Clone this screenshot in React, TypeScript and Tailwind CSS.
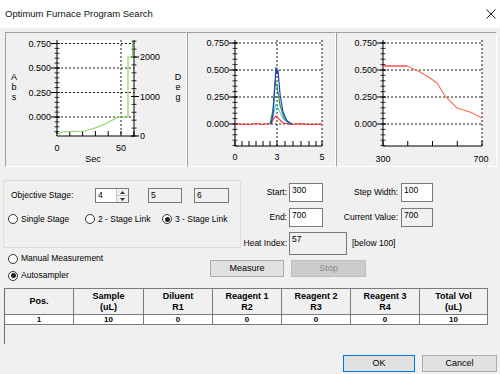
import React from 'react';

const FONT = "font-['Liberation_Sans',Arial,sans-serif]";

// helpers for chart drawing
const range = (from: number, to: number, step: number) => {
  const out: number[] = [];
  for (let v = from; v <= to + 1e-9; v += step) out.push(v);
  return out;
};

const pts = (p: number[][]) => p.map(q => q.join(',')).join(' ');

const AbsAxis = ({ x, y0, scale, top, bottom }: { x: number; y0: number; scale: number; top: number; bottom: number }) => {
  const minor = range(-0.2, 0.75, 0.05).map(v => y0 - v * scale).filter(y => y >= top && y <= bottom);
  const majors = [0.75, 0.5, 0.25, 0].map(v => ({ v, y: y0 - v * scale }));
  return (
    <g>
      <line x1={x} y1={top} x2={x} y2={bottom} stroke="#000" />
      {minor.map((y, i) => (
        <line key={i} x1={x - 2.5} y1={y} x2={x + 2.5} y2={y} stroke="#000" strokeWidth={0.8} />
      ))}
      {majors.map(m => (
        <g key={m.v}>
          <line x1={x - 6} y1={m.y} x2={x + 3} y2={m.y} stroke="#000" />
          <text x={x - 6} y={m.y + 3} fontSize={9} textAnchor="end" fontFamily="Liberation Sans, Arial, sans-serif">
            {m.v.toFixed(3)}
          </text>
        </g>
      ))}
    </g>
  );
};

const Dashed = ({ x1, y1, x2, y2 }: { x1: number; y1: number; x2: number; y2: number }) => (
  <line x1={x1} y1={y1} x2={x2} y2={y2} stroke="#000" strokeWidth={0.9} strokeDasharray="2 2" />
);

const Chart1 = () => {
  const y0 = 117;
  const sc = 98;
  const degY = (d: number) => 136 - d * 0.0395;
  return (
    <svg width={180} height={133} viewBox="6 33 180 133">
      <rect x={57} y={40} width={77} height={96} fill="#fff" />
      {[0.75, 0.5, 0.25, 0].map(v => (
        <Dashed key={v} x1={57} y1={y0 - v * sc} x2={134} y2={y0 - v * sc} />
      ))}
      <Dashed x1={121} y1={40} x2={121} y2={136} />
      <AbsAxis x={57} y0={y0} scale={sc} top={40} bottom={136} />
      {/* right deg axis */}
      <line x1={134} y1={40} x2={134} y2={136} stroke="#000" />
      {range(0, 2400, 200).map(d => (
        <line key={d} x1={131.5} y1={degY(d)} x2={136.5} y2={degY(d)} stroke="#000" strokeWidth={0.8} />
      ))}
      {[0, 1000, 2000].map(d => (
        <g key={d}>
          <line x1={131} y1={degY(d)} x2={139} y2={degY(d)} stroke="#000" />
          <text x={140} y={degY(d) + 3} fontSize={9} fontFamily="Liberation Sans, Arial, sans-serif">{d}</text>
        </g>
      ))}
      {/* time axis */}
      <line x1={57} y1={136} x2={134} y2={136} stroke="#000" />
      {range(0, 6, 1).map(i => (
        <line key={i} x1={57 + i * 12.8} y1={131} x2={57 + i * 12.8} y2={136} stroke="#000" />
      ))}
      <text x={57} y={151} fontSize={9} textAnchor="middle" fontFamily="Liberation Sans, Arial, sans-serif">0</text>
      <text x={121} y={151} fontSize={9} textAnchor="middle" fontFamily="Liberation Sans, Arial, sans-serif">50</text>
      <text x={93} y={162} fontSize={9} textAnchor="middle" fontFamily="Liberation Sans, Arial, sans-serif">Sec</text>
      {['A', 'b', 's'].map((c, i) => (
        <text key={c} x={14} y={80 + i * 10} fontSize={9} textAnchor="middle" fontFamily="Liberation Sans, Arial, sans-serif">{c}</text>
      ))}
      {['D', 'e', 'g'].map((c, i) => (
        <text key={c} x={178} y={80 + i * 10} fontSize={9} textAnchor="middle" fontFamily="Liberation Sans, Arial, sans-serif">{c}</text>
      ))}
      <polyline
        points={pts([[57, 135], [62, 132], [85, 131], [95, 128], [105, 124], [118, 117], [128, 117], [128, 57], [133, 57]])}
        fill="none" stroke="#8fd16a" strokeWidth={1.2}
      />
      <polyline points={pts([[133, 57], [133, 42]])} fill="none" stroke="#4a9a2a" strokeWidth={1.2} />
    </svg>
  );
};

const Chart2 = () => {
  const y0 = 124;
  const sc = 108;
  const ticks = [235, 242, 249, 256, 263, 270, 277, 285, 293, 301, 309, 316, 322];
  return (
    <svg width={147} height={133} viewBox="188 33 147 133">
      <rect x={235} y={40} width={87} height={106} fill="#fff" />
      {[0.75, 0.5, 0.25, 0].map(v => (
        <Dashed key={v} x1={235} y1={y0 - v * sc} x2={322} y2={y0 - v * sc} />
      ))}
      <Dashed x1={277} y1={40} x2={277} y2={146} />
      <Dashed x1={322} y1={40} x2={322} y2={146} />
      <AbsAxis x={235} y0={y0} scale={sc} top={40} bottom={146} />
      <line x1={235} y1={146} x2={322} y2={146} stroke="#000" />
      {ticks.map(x => (
        <line key={x} x1={x} y1={141} x2={x} y2={146} stroke="#000" />
      ))}
      {[[235, '0'], [277, '3'], [322, '5']].map(([x, t]) => (
        <text key={t} x={x} y={160} fontSize={9} textAnchor="middle" fontFamily="Liberation Sans, Arial, sans-serif">{t}</text>
      ))}
      <polyline points={pts([[235, 124], [250, 124.5], [256, 123.5], [262, 124.5], [268, 123.5], [271, 124], [274, 118], [276, 116], [279, 119], [283, 123], [292, 124.5], [300, 123.6], [310, 124.5], [322, 124]])} fill="none" stroke="#ff3030" strokeWidth={1.1} />
      <polyline points={pts([[271, 124], [274, 112], [276, 104], [279, 110], [283, 119], [290, 124]])} fill="none" stroke="#40c8d0" strokeWidth={1} />
      <polyline points={pts([[270, 124], [273, 110], [275, 82], [277, 86], [280, 105], [284, 118], [290, 124]])} fill="none" stroke="#2a9a2a" strokeWidth={1.2} />
      <polyline points={pts([[271, 124], [273, 115], [274.5, 92], [276, 67], [277, 74], [278, 70], [280, 94], [283, 112], [287, 121], [292, 124]])} fill="none" stroke="#2040c0" strokeWidth={1.2} />
    </svg>
  );
};

const Chart3 = () => {
  const y0 = 124;
  const sc = 108;
  return (
    <svg width={159} height={133} viewBox="337 33 159 133">
      <rect x={383} y={40} width={99} height={106} fill="#fff" />
      {[0.75, 0.5, 0.25, 0].map(v => (
        <Dashed key={v} x1={383} y1={y0 - v * sc} x2={482} y2={y0 - v * sc} />
      ))}
      <Dashed x1={482} y1={40} x2={482} y2={146} />
      <AbsAxis x={383} y0={y0} scale={sc} top={40} bottom={146} />
      <line x1={383} y1={146} x2={482} y2={146} stroke="#000" />
      {[0, 1, 2, 3, 4].map(i => (
        <line key={i} x1={383 + i * 24.75} y1={141} x2={383 + i * 24.75} y2={146} stroke="#000" />
      ))}
      <text x={383} y={162} fontSize={9} textAnchor="middle" fontFamily="Liberation Sans, Arial, sans-serif">300</text>
      <text x={481} y={162} fontSize={9} textAnchor="middle" fontFamily="Liberation Sans, Arial, sans-serif">700</text>
      <polyline points={pts([[383, 66], [407, 66]])} fill="none" stroke="#ff2020" strokeWidth={1.2} />
      <polyline
        points={pts([[407, 66], [420, 72], [430, 78], [437, 83], [445, 96], [457, 108], [470, 112], [482, 118]])}
        fill="none" stroke="#ff6a5a" strokeWidth={1.1}
      />
    </svg>
  );
};

const Radio = ({ checked = false, label, className = '' }: { checked?: boolean; label: string; className?: string }) => (
  <div className={`flex items-center gap-[3px] ${className}`}>
    <div className="w-[10px] h-[10px] rounded-full border border-[#333] bg-white flex items-center justify-center shrink-0">
      {checked && <div className="w-[5px] h-[5px] rounded-full bg-[#222]" />}
    </div>
    <span className="whitespace-nowrap">{label}</span>
  </div>
);

const Field = ({ value, w, h = 'h-[19px]', gray = false }: { value: string; w: string; h?: string; gray?: boolean }) => (
  <div className={`${w} ${h} border border-[#7a7a7a] ${gray ? 'bg-[#f0f0f0]' : 'bg-white'} px-[2px] pt-[1px] leading-[11px]`}>
    {value}
  </div>
);

const Label = ({ text, w }: { text: string; w: string }) => (
  <div className={`${w} flex justify-end whitespace-nowrap`}>{text}</div>
);

const cols = [
  { w: 'w-[69px]', h1: 'Pos.', h2: '', v: '1' },
  { w: 'w-[70px]', h1: 'Sample', h2: '(uL)', v: '10' },
  { w: 'w-[69px]', h1: 'Diluent', h2: 'R1', v: '0' },
  { w: 'w-[69px]', h1: 'Reagent 1', h2: 'R2', v: '0' },
  { w: 'w-[69px]', h1: 'Reagent 2', h2: 'R3', v: '0' },
  { w: 'w-[69px]', h1: 'Reagent 3', h2: 'R4', v: '0' },
  { w: 'w-[68px]', h1: 'Total Vol', h2: '(uL)', v: '10' },
];

export default function App() {
  return (
    <div className={`w-[500px] h-[374px] bg-[#f0f0f0] text-[8.5px] text-black overflow-hidden ${FONT}`}>
      {/* title bar */}
      <div className="h-[28px] bg-white flex items-center justify-between pl-[5px] pr-[4px]">
        <span className="text-[9.5px] text-[#111]">Optimum Furnace Program Search</span>
        <svg width={10} height={10} viewBox="0 0 10 10">
          <path d="M0.5 0.5 L9.5 9.5 M9.5 0.5 L0.5 9.5" stroke="#222" strokeWidth={1} />
        </svg>
      </div>

      {/* charts */}
      <div className="mt-[4px] ml-[5px] flex h-[135px]">
        <div className="w-[182px] border border-[#a0a0a0] border-r-white border-b-white">
          <Chart1 />
        </div>
        <div className="w-[149px] border border-[#a0a0a0] border-r-white border-b-white">
          <Chart2 />
        </div>
        <div className="w-[161px] border border-[#a0a0a0] border-r-white border-b-white">
          <Chart3 />
        </div>
      </div>

      {/* stage + range settings */}
      <div className="flex items-start">
        <div className="ml-[3px] mt-[13px] w-[238px] h-[68px] border border-[#dcdcdc] rounded-[2px] pl-[7px] pt-[7px]">
          <div className="flex items-center h-[15px]">
            <span className="w-[84px]">Objective Stage:</span>
            <div className="flex h-[15px] border border-[#7a7a7a] bg-white">
              <div className="w-[20px] px-[2px] leading-[12px]">4</div>
              <div className="w-[12px] flex flex-col border-l border-[#c8c8c8]">
                <div className="flex-1 bg-[#f0f0f0] border-b border-[#c8c8c8] flex items-center justify-center">
                  <svg width={5} height={3}><path d="M0 3 L2.5 0 L5 3 Z" fill="#333" /></svg>
                </div>
                <div className="flex-1 bg-[#f0f0f0] flex items-center justify-center">
                  <svg width={5} height={3}><path d="M0 0 L2.5 3 L5 0 Z" fill="#333" /></svg>
                </div>
              </div>
            </div>
            <div className="ml-[19px] w-[34px] h-[15px] border border-[#7a7a7a] bg-[#f0f0f0] px-[2px] leading-[12px]">5</div>
            <div className="ml-[12px] w-[35px] h-[15px] border border-[#7a7a7a] bg-[#f0f0f0] px-[2px] leading-[12px]">6</div>
          </div>
          <div className="flex items-center mt-[10px] -ml-[3px]">
            <Radio label="Single Stage" className="w-[77px]" />
            <Radio label="2 - Stage Link" className="w-[77px]" />
            <Radio label="3 - Stage Link" checked />
          </div>
        </div>

        <div className="mt-[16px] flex flex-col">
          <div className="flex items-center">
            <Label text="Start:" w="w-[46px]" />
            <div className="ml-[2px]"><Field value="300" w="w-[34px]" /></div>
            <Label text="Step Width:" w="w-[75px]" />
            <div className="ml-[3px]"><Field value="100" w="w-[32px]" /></div>
          </div>
          <div className="flex items-center mt-[6px]">
            <Label text="End:" w="w-[46px]" />
            <div className="ml-[2px]"><Field value="700" w="w-[34px]" /></div>
            <Label text="Current Value:" w="w-[75px]" />
            <div className="ml-[3px]"><Field value="700" w="w-[32px]" gray /></div>
          </div>
          <div className="flex items-center mt-[5px]">
            <Label text="Heat Index:" w="w-[46px]" />
            <div className="ml-[2px]"><Field value="57" w="w-[58px]" h="h-[23px]" gray /></div>
            <span className="ml-[5px]">[below 100]</span>
          </div>
        </div>
      </div>

      {/* measurement mode + actions */}
      <div className="flex items-start">
        <div className="w-[210px] -mt-[5px] pl-[8px] flex flex-col">
          <Radio label="Manual Measurement" className="h-[17px]" />
          <Radio label="Autosampler" checked className="h-[17px]" />
        </div>
        <div className="mt-[5px] flex gap-[7px]">
          <div className="w-[74px] h-[17px] border border-[#adadad] bg-[#e1e1e1] flex items-center justify-center text-[9px]">Measure</div>
          <div className="w-[75px] h-[17px] border border-[#bfbfbf] bg-[#cccccc] flex items-center justify-center text-[9px] text-[#8a8a8a]">Stop</div>
        </div>
      </div>

      {/* autosampler table */}
      <div className="mt-[4px] ml-[4px] w-[493px] h-[56px] border-l border-[#6d6d6d] bg-[#f0f0f0]">
        <div className="flex">
          {cols.map(c => (
            <div key={c.h1} className={`${c.w} h-[27px] border-r border-b border-t border-[#7a7a7a] bg-[#f0f0f0] flex flex-col items-center justify-center font-bold text-[9px] leading-[11px]`}>
              <span>{c.h1}</span>
              {c.h2 && <span>{c.h2}</span>}
            </div>
          ))}
        </div>
        <div className="flex">
          {cols.map(c => (
            <div key={c.h1} className={`${c.w} h-[10px] border-r border-b border-[#7a7a7a] bg-white flex items-center justify-center font-bold text-[8px] leading-[8px]`}>
              {c.v}
            </div>
          ))}
        </div>
      </div>

      {/* dialog buttons */}
      <div className="mt-[11px] flex justify-end gap-[7px] pr-[3px]">
        <div className="w-[72px] h-[17px] border border-[#0078d7] bg-[#e1e1e1] flex items-center justify-center text-[9px]">OK</div>
        <div className="w-[75px] h-[17px] border border-[#adadad] bg-[#e1e1e1] flex items-center justify-center text-[9px]">Cancel</div>
      </div>
    </div>
  );
}
